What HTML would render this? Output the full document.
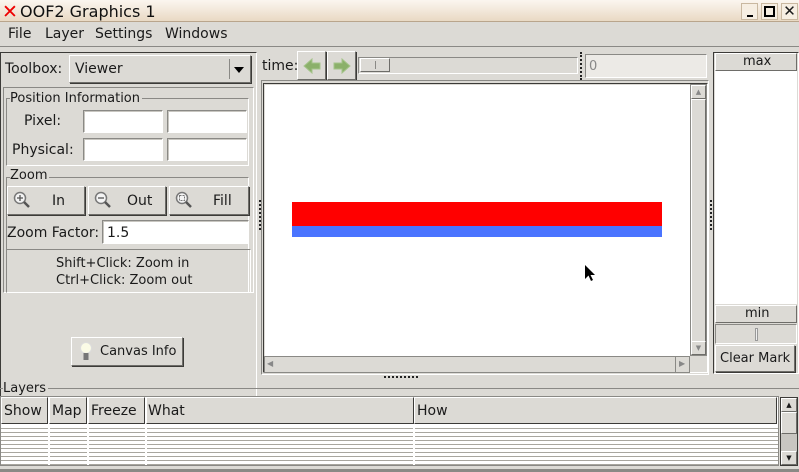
<!DOCTYPE html>
<html><head><style>
*{box-sizing:border-box;margin:0;padding:0}
body{width:799px;height:472px;background:#dcdad5;font-family:"DejaVu Sans","Liberation Sans",sans-serif;font-size:13px;color:#1a1a1a;position:relative;overflow:hidden}
.a{position:absolute}
.btn{position:absolute;background:#dcdad5;border:1px solid;border-color:#fff #6e6d69 #6e6d69 #fff;box-shadow:1px 1px 0 #3c3b38}
.ent{position:absolute;background:#fff;border:1px solid;border-color:#8a8985 #fff #fff #8a8985;box-shadow:inset 1px 1px 0 #c8c6c0}
.sunk{position:absolute;border:1px solid;border-color:#8a8985 #fff #fff #8a8985}
.t{position:absolute;white-space:nowrap;margin-top:1px}
</style></head><body>
<!-- title bar -->
<div class="a" style="left:0;top:0;width:799px;height:22px;background:linear-gradient(#fbf6ef,#e9d9c4);border-bottom:1px solid #b9a58c"></div>
<div class="t" style="left:2px;top:1px;color:#e00;font-size:19px;font-weight:bold;line-height:20px">✕</div>
<div class="t" style="left:20px;top:0;font-size:16px;line-height:22px;color:#111">OOF2 Graphics 1</div>
<div class="a" style="left:741px;top:3px;width:17px;height:17px;border:1px solid #c9b8a0;background:#f6eee2"><div class="a" style="left:5px;top:11px;width:6px;height:2px;background:#000"></div></div>
<div class="a" style="left:761px;top:3px;width:17px;height:17px;border:1px solid #c9b8a0;background:#f6eee2"><div class="a" style="left:2px;top:2px;width:11px;height:11px;border:2px solid #000"></div></div>
<div class="a" style="left:781px;top:3px;width:17px;height:17px;border:1px solid #c9b8a0;background:#f6eee2;font-size:15px;font-weight:bold;line-height:15px;text-align:center">✕</div>
<!-- menu -->
<div class="a" style="left:0;top:46px;width:799px;height:1px;background:#8a8985"></div>
<div class="t" style="left:8px;top:25px;font-size:14px">File</div>
<div class="t" style="left:45px;top:25px;font-size:14px">Layer</div>
<div class="t" style="left:95px;top:25px;font-size:14px">Settings</div>
<div class="t" style="left:165px;top:25px;font-size:14px">Windows</div>
<!-- left panel -->
<div class="a" style="left:0;top:52px;width:257px;height:349px;border:1px solid;border-color:#3c3b38 #fff #fff #3c3b38"></div>
<div class="t" style="left:5px;top:60px;font-size:14px">Toolbox:</div>
<div class="btn" style="left:69px;top:55px;width:182px;height:28px"></div>
<div class="t" style="left:75px;top:60px;font-size:14px">Viewer</div>
<div class="a" style="left:229px;top:59px;width:1px;height:20px;background:#8a8985"></div>
<div class="a" style="left:234px;top:67px;width:0;height:0;border-left:5px solid transparent;border-right:5px solid transparent;border-top:6px solid #000"></div>
<div class="a" style="left:3px;top:87px;width:251px;height:206px;border:1px solid;border-color:#8a8985 #fff #fff #8a8985"></div>
<div class="a" style="left:6px;top:98px;width:243px;height:68px;border:1px solid #8a8985;border-right-color:#fff;border-bottom-color:#fff"></div>
<div class="t" style="left:10px;top:90px;background:#dcdad5;font-size:13px;padding-right:2px">Position Information</div>
<div class="t" style="left:24px;top:112px;font-size:14px">Pixel:</div>
<div class="t" style="left:12px;top:141px;font-size:14px">Physical:</div>
<div class="ent" style="left:83px;top:110px;width:80px;height:23px"></div>
<div class="ent" style="left:167px;top:110px;width:80px;height:23px"></div>
<div class="ent" style="left:83px;top:138px;width:80px;height:23px"></div>
<div class="ent" style="left:167px;top:138px;width:80px;height:23px"></div>
<div class="a" style="left:6px;top:177px;width:243px;height:116px;border:1px solid #8a8985;border-right-color:#fff;border-bottom:none"></div>
<div class="t" style="left:10px;top:167px;background:#dcdad5;font-size:13px;padding-right:2px">Zoom</div>
<div class="btn" style="left:7px;top:186px;width:78px;height:29px"></div>
<div class="btn" style="left:88px;top:186px;width:78px;height:29px"></div>
<div class="btn" style="left:169px;top:186px;width:80px;height:29px"></div>
<svg class="a" style="left:12px;top:190px" width="20" height="20"><circle cx="8" cy="8" r="5.5" fill="#f4f4f4" stroke="#777" stroke-width="1.5"/><line x1="12" y1="12" x2="17" y2="17" stroke="#555" stroke-width="2.5"/><path d="M5 8h6M8 5v6" stroke="#555" stroke-width="1.3"/></svg>
<svg class="a" style="left:93px;top:190px" width="20" height="20"><circle cx="8" cy="8" r="5.5" fill="#f4f4f4" stroke="#777" stroke-width="1.5"/><line x1="12" y1="12" x2="17" y2="17" stroke="#555" stroke-width="2.5"/><path d="M5 8h6" stroke="#555" stroke-width="1.3"/></svg>
<svg class="a" style="left:174px;top:190px" width="20" height="20"><circle cx="8" cy="8" r="5.5" fill="#f4f4f4" stroke="#777" stroke-width="1.5"/><line x1="12" y1="12" x2="17" y2="17" stroke="#555" stroke-width="2.5"/><rect x="5.5" y="5.5" width="5" height="5" fill="none" stroke="#777" stroke-dasharray="2 1"/></svg>
<div class="t" style="left:52px;top:192px;font-size:14px">In</div>
<div class="t" style="left:127px;top:192px;font-size:14px">Out</div>
<div class="t" style="left:213px;top:192px;font-size:14px">Fill</div>
<div class="t" style="left:7px;top:224px;font-size:14px">Zoom Factor:</div>
<div class="ent" style="left:102px;top:220px;width:147px;height:24px"></div>
<div class="t" style="left:107px;top:224px;font-size:14px">1.5</div>
<div class="a" style="left:6px;top:249px;width:245px;height:44px;border:1px solid;border-color:#8a8985 #fff #fff #8a8985"></div>
<div class="t" style="left:56px;top:255px;font-size:13px">Shift+Click: Zoom in</div>
<div class="t" style="left:56px;top:272px;font-size:13px">Ctrl+Click: Zoom out</div>
<div class="btn" style="left:71px;top:337px;width:112px;height:29px"></div>
<svg class="a" style="left:79px;top:341px" width="14" height="22"><circle cx="7" cy="7" r="5.5" fill="#fbfbe6" stroke="#ddd"/><rect x="4.5" y="12" width="5" height="7" fill="#777"/></svg>
<div class="t" style="left:100px;top:343px;font-size:13px">Canvas Info</div>
<div class="a" style="left:259px;top:200px;width:2px;height:30px;border-left:2px dotted #222"></div>
<!-- middle -->
<div class="t" style="left:262px;top:57px;font-size:14px">time:</div>
<div class="btn" style="left:297px;top:51px;width:29px;height:29px"></div>
<div class="btn" style="left:327px;top:51px;width:29px;height:29px"></div>
<svg class="a" style="left:302px;top:56px" width="20" height="20"><path d="M2 10L10 3v4h8v6h-8v4z" fill="#8bb06a" stroke="#a5c48a"/></svg>
<svg class="a" style="left:332px;top:56px" width="20" height="20"><path d="M18 10L10 3v4H2v6h8v4z" fill="#8bb06a" stroke="#a5c48a"/></svg>
<div class="sunk" style="left:358px;top:57px;width:220px;height:17px"></div>
<div class="btn" style="left:360px;top:58px;width:30px;height:14px;box-shadow:none"><div class="a" style="left:14px;top:2px;width:1px;height:8px;background:#8a8985"></div></div>
<div class="a" style="left:580px;top:52px;width:2px;height:28px;border-left:2px dotted #222"></div>
<div class="sunk" style="left:585px;top:54px;width:122px;height:24px;background:#eceae6"></div>
<div class="t" style="left:589px;top:58px;font-size:13px;color:#888">0</div>
<div class="a" style="left:261px;top:80px;width:448px;height:295px;border:1px solid;border-color:#8a8985 #fff #fff #8a8985"></div>
<div class="a" style="left:263px;top:83px;width:445px;height:290px;border:1px solid;border-color:#3c3b38 #fff #fff #3c3b38"></div>
<div class="a" style="left:265px;top:85px;width:425px;height:271px;background:#fff"></div>
<div class="a" style="left:690px;top:84px;width:17px;height:272px;background:#c8c6c1;border:1px solid #8a8985"></div>
<div class="btn" style="left:691px;top:85px;width:15px;height:14px;box-shadow:none;font-size:7px;text-align:center;color:#888;line-height:12px">▲</div>
<div class="btn" style="left:691px;top:99px;width:15px;height:243px;box-shadow:none"></div>
<div class="btn" style="left:691px;top:341px;width:15px;height:14px;box-shadow:none;font-size:7px;text-align:center;color:#888;line-height:12px">▼</div>
<div class="a" style="left:264px;top:356px;width:426px;height:17px;background:#dcdad5;border:1px solid #8a8985"></div>
<div class="t" style="left:267px;top:358px;font-size:8px;color:#888">◀</div>
<div class="a" style="left:675px;top:357px;width:1px;height:15px;background:#8a8985"></div>
<div class="t" style="left:679px;top:358px;font-size:8px;color:#888">▶</div>
<div class="a" style="left:292px;top:202px;width:370px;height:24px;background:#ff0000"></div>
<div class="a" style="left:292px;top:226px;width:370px;height:11px;background:#4a74ff"></div>
<svg class="a" style="left:584px;top:264px" width="12" height="18"><path d="M1 1v14l3.5-3.5 2.5 5.5 2-1-2.5-5H11z" fill="#000"/></svg>
<div class="a" style="left:710px;top:200px;width:2px;height:30px;border-left:2px dotted #222"></div>
<!-- right -->
<div class="a" style="left:713px;top:52px;width:86px;height:322px;border:1px solid;border-color:#3c3b38 #fff #fff #3c3b38"></div>
<div class="btn" style="left:715px;top:53px;width:82px;height:18px;box-shadow:none"></div>
<div class="t" style="left:743px;top:53px;font-size:13px">max</div>
<div class="a" style="left:715px;top:71px;width:82px;height:233px;background:#fff"></div>
<div class="btn" style="left:715px;top:305px;width:82px;height:18px;box-shadow:none"></div>
<div class="t" style="left:745px;top:305px;font-size:13px">min</div>
<div class="sunk" style="left:715px;top:324px;width:82px;height:20px"><div class="a" style="left:39px;top:3px;width:3px;height:13px;border:1px solid #999;background:#eee"></div></div>
<div class="btn" style="left:715px;top:345px;width:80px;height:27px"></div>
<div class="t" style="left:720px;top:350px;font-size:13px">Clear Mark</div>
<div class="a" style="left:384px;top:376px;width:34px;height:2px;border-top:2px dotted #222"></div>
<!-- layers -->
<div class="a" style="left:0;top:388px;width:799px;height:1px;background:#8a8985"></div>
<div class="t" style="left:3px;top:380px;background:#dcdad5;font-size:13px;padding-right:2px">Layers</div>
<div class="a" style="left:0;top:396px;width:779px;height:70px;background:#fff;border:1px solid #8a8985"></div>
<div class="a" style="left:1px;top:425px;width:777px;height:40px;background:repeating-linear-gradient(#fff 0,#fff 3px,#a8a69f 3px,#a8a69f 4px)"></div>
<div class="btn" style="left:1px;top:397px;width:47px;height:27px;box-shadow:none;border-bottom-color:#3c3b38;border-right-color:#3c3b38"></div>
<div class="btn" style="left:49px;top:397px;width:38px;height:27px;box-shadow:none;border-bottom-color:#3c3b38;border-right-color:#3c3b38"></div>
<div class="btn" style="left:88px;top:397px;width:57px;height:27px;box-shadow:none;border-bottom-color:#3c3b38;border-right-color:#3c3b38"></div>
<div class="btn" style="left:146px;top:397px;width:268px;height:27px;box-shadow:none;border-bottom-color:#3c3b38;border-right-color:#3c3b38"></div>
<div class="btn" style="left:414px;top:397px;width:363px;height:27px;box-shadow:none;border-bottom-color:#3c3b38;border-right-color:#3c3b38"></div>
<div class="a" style="left:48px;top:424px;width:2px;height:41px;background:#fff"></div>
<div class="a" style="left:87px;top:424px;width:2px;height:41px;background:#fff"></div>
<div class="a" style="left:145px;top:424px;width:2px;height:41px;background:#fff"></div>
<div class="a" style="left:413px;top:424px;width:2px;height:41px;background:#fff"></div>
<div class="t" style="left:4px;top:402px;font-size:14px">Show</div>
<div class="t" style="left:52px;top:402px;font-size:14px">Map</div>
<div class="t" style="left:91px;top:402px;font-size:14px">Freeze</div>
<div class="t" style="left:148px;top:402px;font-size:14px">What</div>
<div class="t" style="left:417px;top:402px;font-size:14px">How</div>
<div class="a" style="left:780px;top:397px;width:18px;height:69px;background:#c8c6c1;border:1px solid #3c3b38"></div>
<div class="btn" style="left:781px;top:398px;width:16px;height:14px;box-shadow:none;font-size:7px;text-align:center;line-height:12px">▲</div>
<div class="btn" style="left:781px;top:412px;width:16px;height:22px;box-shadow:none"></div>
<div class="btn" style="left:781px;top:451px;width:16px;height:14px;box-shadow:none;font-size:7px;text-align:center;line-height:12px">▼</div>
<div class="a" style="left:0;top:469px;width:799px;height:3px;background:#8a8985"></div>
</body></html>
